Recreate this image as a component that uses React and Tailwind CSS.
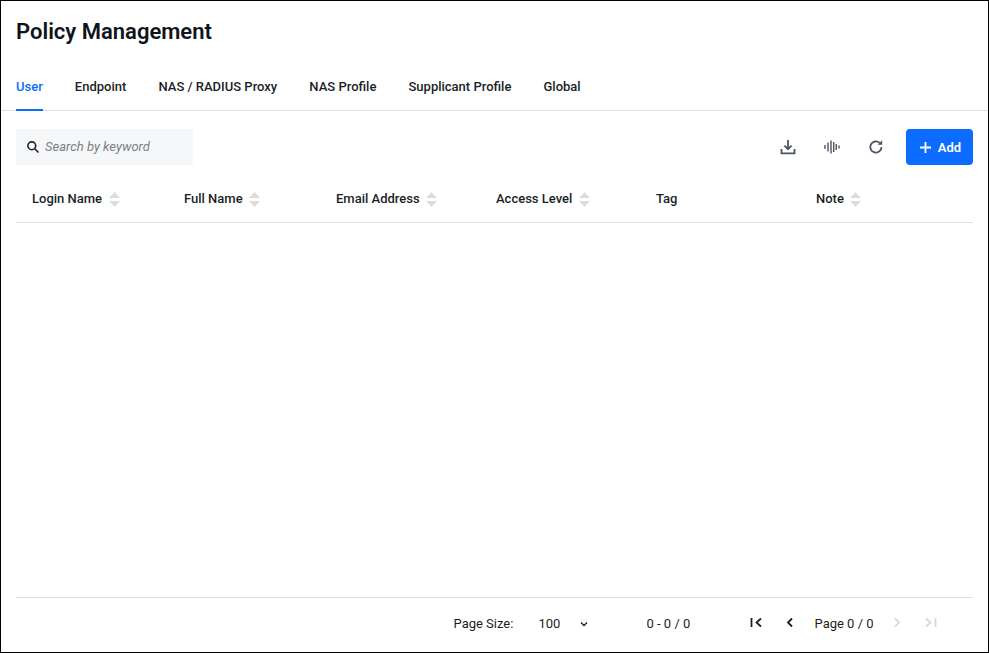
import React from "react";

const tabs = ["User", "Endpoint", "NAS / RADIUS Proxy", "NAS Profile", "Supplicant Profile", "Global"];
const cols = [
  ["Login Name", "w-[152px]", true],
  ["Full Name", "w-[152px]", true],
  ["Email Address", "w-[160px]", true],
  ["Access Level", "w-[160px]", true],
  ["Tag", "w-[160px]", false],
  ["Note", "w-[157px]", true],
];

function Sort() {
  return (
    <svg width="11" height="15" viewBox="0 0 11 15" className="ml-[6.5px] shrink-0">
      <path d="M5.5 0 L11 6 L0 6 Z" fill="#dcdcdc" />
      <path d="M5.5 15 L11 9 L0 9 Z" fill="#dcdcdc" />
    </svg>
  );
}

function Chevron({ d, color }) {
  return (
    <svg width="16" height="16" viewBox="0 0 16 16" fill="none" stroke={color} strokeWidth="1.8">
      <path d={d} />
    </svg>
  );
}

export default function App() {
  return (
    <div className="w-[989px] h-[653px] border border-black bg-white flex flex-col text-[#111827] font-['Roboto',sans-serif] overflow-hidden">
      <h1 className="h-[60px] pl-[15px] pt-[15px] text-[22px] leading-[32px] font-semibold text-[#10141a]">Policy Management</h1>
      <div className="h-[50px] pl-[15px] flex gap-[32.1px] border-b border-[#dedede] shrink-0">
        {tabs.map((t, i) => (
          <div
            key={t}
            className={`h-[50px] pt-[17px] text-[13px] leading-[18px] font-medium ${i === 0 ? "text-[#0b6cff] border-b-2 border-[#0b6cff]" : "text-[#1a1f26]"}`}
          >
            {t}
          </div>
        ))}
      </div>
      <div className="mt-[18px] px-[15px] h-[36px] flex items-center justify-between shrink-0">
        <div className="w-[177px] h-[36px] bg-[#f6f7f9] flex items-center pl-[10px]">
          <svg width="14" height="14" viewBox="0 0 14 14" fill="none" stroke="#1f2328" strokeWidth="1.6">
            <circle cx="5.8" cy="5.8" r="3.9" />
            <path d="M8.8 8.8 L12.5 12.5" />
          </svg>
          <span className="ml-[5px] text-[13px] italic text-[#7c7f85]">Search by keyword</span>
        </div>
        <div className="flex items-center">
          <svg width="16" height="16" viewBox="0 0 16 16" fill="none" stroke="#4b5563" strokeWidth="1.8" className="mr-[28px]">
            <path d="M8 1 V10 M4.4 6.6 L8 10.2 L11.6 6.6" />
            <path d="M1.5 10 V14.3 H14.5 V10" />
          </svg>
          <svg width="16" height="16" viewBox="0 0 16 16" fill="none" stroke="#4b5563" strokeWidth="1.4" className="mr-[28px]">
            <path d="M1 6 V10 M4 3.5 V12.5 M7 1.5 V14.5 M9.7 3 V13 M12.3 5 V11 M15 6.5 V9.5" />
          </svg>
          <svg width="16" height="16" viewBox="0 0 16 16" fill="none" stroke="#4b5563" strokeWidth="1.8" className="mr-[22px]">
            <path d="M13.5 8 A5.6 5.6 0 1 1 11.6 3.8" />
            <path d="M14.2 1.2 V5.8 H9.6 Z" fill="#4b5563" stroke="none" />
          </svg>
          <button className="w-[67px] h-[36px] rounded-[4px] bg-[#0b6cff] text-white flex items-center justify-center text-[13px] font-semibold pl-[2px]">
            <svg width="11" height="11" viewBox="0 0 11 11" stroke="white" strokeWidth="1.8" className="mr-[7px]">
              <path d="M5.5 0 V11 M0 5.5 H11" />
            </svg>
            <span className="translate-y-px">Add</span>
          </button>
        </div>
      </div>
      <div className="mx-[15px] mt-[15px] h-[43px] flex items-center pl-[16px] pb-[4px] border-b border-[#dedede] shrink-0">
        {cols.map(([c, w, s]) => (
          <div key={c} className={`${w} flex items-center text-[13px] font-medium text-[#1a1f26]`}>
            {c}
            {s && <Sort />}
          </div>
        ))}
      </div>
      <div className="flex-1" />
      <div className="mx-[15px] h-[55px] border-t border-[#dedede] flex items-center text-[13px] text-[#1a1f26] shrink-0">
        <div className="flex items-center pl-[437.5px] pb-[2px] w-full">
          <span className="w-[85px]">Page Size:</span>
          <span className="w-[40px]">100</span>
          <svg width="12" height="12" viewBox="0 0 12 12" fill="none" stroke="#1a1f26" strokeWidth="1.3" className="-ml-px">
            <path d="M3 4.5 L6 7.5 L9 4.5" />
          </svg>
          <span className="ml-[57px] w-[102px]">0 - 0 / 0</span>
          <div className="flex items-center -mt-[2px]">
            <Chevron color="#1a1f26" d="M2.5 3 V12 M12 3.5 L7.5 7.5 L12 11.5" />
          </div>
          <div className="flex items-center ml-[17px] -mt-[2px]">
            <Chevron color="#1a1f26" d="M10 3.5 L6 7.5 L10 11.5" />
          </div>
          <span className="ml-[17px]">Page 0 / 0</span>
          <div className="flex items-center ml-[15px] -mt-[2px]">
            <Chevron color="#d6d8db" d="M6 3.5 L10 7.5 L6 11.5" />
          </div>
          <div className="flex items-center ml-[18px] -mt-[2px]">
            <Chevron color="#d6d8db" d="M3 3.5 L7.5 7.5 L3 11.5 M12.5 3 V12" />
          </div>
        </div>
      </div>
    </div>
  );
}
